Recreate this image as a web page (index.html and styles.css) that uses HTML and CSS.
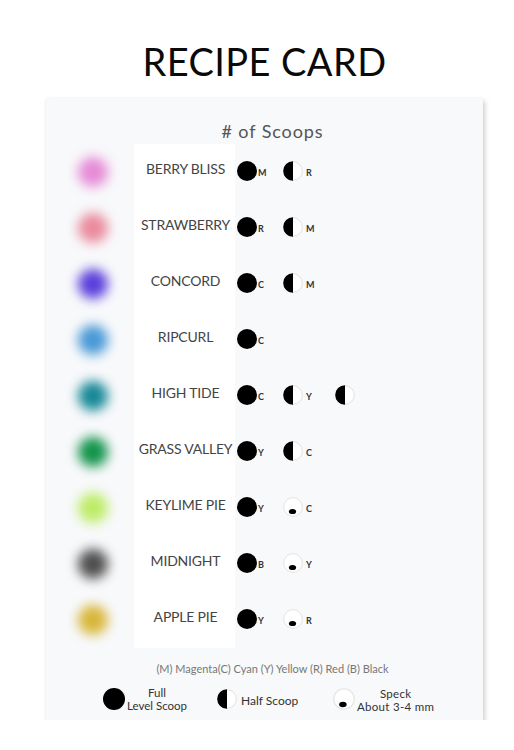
FILE: index.html
```html
<!DOCTYPE html>
<html>
<head>
<meta charset="utf-8">
<link rel="stylesheet" href="styles.css">
</head>
<body>
<div class="page">
  <h1 class="title">RECIPE CARD</h1>
  <div class="card">
    <div class="head">#&nbsp;of Scoops</div>
    <div class="rows">
      <div class="row">
        <div class="swatch"><span class="blob" style="background:#e68ad6"></span></div>
        <div class="name">BERRY BLISS</div>
        <div class="doses">
          <div class="dose"><span class="full"></span><span class="ltr">M</span></div>
          <div class="dose"><svg class="half" viewBox="0 0 20 20"><circle cx="10" cy="10" r="9.3" fill="#fff" stroke="#e0e0e0" stroke-width="1"/><path d="M10 0.2 A9.8 9.8 0 0 0 10 19.8 Z" fill="#000"/></svg><span class="ltr">R</span></div>
        </div>
      </div>
      <div class="row">
        <div class="swatch"><span class="blob" style="background:#ea8a9c"></span></div>
        <div class="name">STRAWBERRY</div>
        <div class="doses">
          <div class="dose"><span class="full"></span><span class="ltr">R</span></div>
          <div class="dose"><svg class="half" viewBox="0 0 20 20"><circle cx="10" cy="10" r="9.3" fill="#fff" stroke="#e0e0e0" stroke-width="1"/><path d="M10 0.2 A9.8 9.8 0 0 0 10 19.8 Z" fill="#000"/></svg><span class="ltr">M</span></div>
        </div>
      </div>
      <div class="row">
        <div class="swatch"><span class="blob" style="background:#5a3edb"></span></div>
        <div class="name">CONCORD</div>
        <div class="doses">
          <div class="dose"><span class="full"></span><span class="ltr">C</span></div>
          <div class="dose"><svg class="half" viewBox="0 0 20 20"><circle cx="10" cy="10" r="9.3" fill="#fff" stroke="#e0e0e0" stroke-width="1"/><path d="M10 0.2 A9.8 9.8 0 0 0 10 19.8 Z" fill="#000"/></svg><span class="ltr">M</span></div>
        </div>
      </div>
      <div class="row">
        <div class="swatch"><span class="blob" style="background:#4898d6"></span></div>
        <div class="name">RIPCURL</div>
        <div class="doses">
          <div class="dose"><span class="full"></span><span class="ltr">C</span></div>
        </div>
      </div>
      <div class="row">
        <div class="swatch"><span class="blob" style="background:#178896"></span></div>
        <div class="name">HIGH TIDE</div>
        <div class="doses">
          <div class="dose"><span class="full"></span><span class="ltr">C</span></div>
          <div class="dose"><svg class="half" viewBox="0 0 20 20"><circle cx="10" cy="10" r="9.3" fill="#fff" stroke="#e0e0e0" stroke-width="1"/><path d="M10 0.2 A9.8 9.8 0 0 0 10 19.8 Z" fill="#000"/></svg><span class="ltr">Y</span></div>
          <div class="dose"><svg class="half" viewBox="0 0 20 20"><circle cx="10" cy="10" r="9.3" fill="#fff" stroke="#e0e0e0" stroke-width="1"/><path d="M10 0.2 A9.8 9.8 0 0 0 10 19.8 Z" fill="#000"/></svg></div>
        </div>
      </div>
      <div class="row">
        <div class="swatch"><span class="blob" style="background:#12934a"></span></div>
        <div class="name">GRASS VALLEY</div>
        <div class="doses">
          <div class="dose"><span class="full"></span><span class="ltr">Y</span></div>
          <div class="dose"><svg class="half" viewBox="0 0 20 20"><circle cx="10" cy="10" r="9.3" fill="#fff" stroke="#e0e0e0" stroke-width="1"/><path d="M10 0.2 A9.8 9.8 0 0 0 10 19.8 Z" fill="#000"/></svg><span class="ltr">C</span></div>
        </div>
      </div>
      <div class="row">
        <div class="swatch"><span class="blob" style="background:#bdec66"></span></div>
        <div class="name">KEYLIME PIE</div>
        <div class="doses">
          <div class="dose"><span class="full"></span><span class="ltr">Y</span></div>
          <div class="dose"><svg class="half" viewBox="0 0 20 20"><circle cx="10" cy="10" r="9.3" fill="#fff" stroke="#e2e2e2" stroke-width="1"/><ellipse cx="9.5" cy="14.5" rx="3.6" ry="2.6" fill="#000"/></svg><span class="ltr">C</span></div>
        </div>
      </div>
      <div class="row">
        <div class="swatch"><span class="blob" style="background:#4e4e4e"></span></div>
        <div class="name">MIDNIGHT</div>
        <div class="doses">
          <div class="dose"><span class="full"></span><span class="ltr">B</span></div>
          <div class="dose"><svg class="half" viewBox="0 0 20 20"><circle cx="10" cy="10" r="9.3" fill="#fff" stroke="#e2e2e2" stroke-width="1"/><ellipse cx="9.5" cy="14.5" rx="3.6" ry="2.6" fill="#000"/></svg><span class="ltr">Y</span></div>
        </div>
      </div>
      <div class="row">
        <div class="swatch"><span class="blob" style="background:#d8b63a"></span></div>
        <div class="name">APPLE PIE</div>
        <div class="doses">
          <div class="dose"><span class="full"></span><span class="ltr">Y</span></div>
          <div class="dose"><svg class="half" viewBox="0 0 20 20"><circle cx="10" cy="10" r="9.3" fill="#fff" stroke="#e2e2e2" stroke-width="1"/><ellipse cx="9.5" cy="14.5" rx="3.6" ry="2.6" fill="#000"/></svg><span class="ltr">R</span></div>
        </div>
      </div>
    </div>
    <div class="codes">(M) Magenta(C) Cyan (Y) Yellow (R) Red (B) Black</div>
    <div class="legend">
      <div class="key key-full"><span class="full big"></span><span class="keytext">Full<br>Level Scoop</span></div>
      <div class="key key-half"><svg class="half" viewBox="0 0 20 20"><circle cx="10" cy="10" r="9.3" fill="#fff" stroke="#e0e0e0" stroke-width="1"/><path d="M10 0.2 A9.8 9.8 0 0 0 10 19.8 Z" fill="#000"/></svg><span class="keytext">Half Scoop</span></div>
      <div class="key key-speck"><svg class="half big" viewBox="0 0 20 20"><circle cx="10" cy="10" r="9.3" fill="#fff" stroke="#e2e2e2" stroke-width="1"/><ellipse cx="9" cy="15" rx="3.4" ry="2.5" fill="#000"/></svg><span class="keytext">Speck<br>About 3-4 mm</span></div>
    </div>
  </div>
</div>
</body>
</html>
```
FILE: styles.css
```css
html, body {
  margin: 0;
  padding: 0;
  background: #ffffff;
}
body {
  font-family: Lato, "Liberation Sans", sans-serif;
  color: #333;
}
.page {
  width: 437px;
  margin-left: 46px;
}
.title {
  margin: 0;
  height: 98px;
  box-sizing: border-box;
  padding-top: 38px;
  text-align: center;
  font-size: 38px;
  line-height: 46px;
  font-weight: 400;
  letter-spacing: 0.4px;
  color: #0a0a0a;
}
.card {
  height: 622px;
  box-sizing: border-box;
  background: #f8f9fb;
  box-shadow: 2px 3px 5px rgba(0,0,0,0.18), 0 0 2px rgba(0,0,0,0.06);
  display: flex;
  flex-direction: column;
}
.head {
  height: 46px;
  box-sizing: border-box;
  padding-top: 21px;
  padding-left: 16px;
  line-height: 24px;
  text-align: center;
  font-size: 18px;
  letter-spacing: 0.9px;
  color: #555;
}
.rows {
  display: flex;
  flex-direction: column;
}
.row {
  display: grid;
  grid-template-columns: 88px 101px 1fr;
  height: 56px;
  align-items: center;
}
.swatch {
  display: flex;
  justify-content: center;
  align-items: center;
  height: 56px;
  padding-left: 6px;
}
.blob {
  width: 30px;
  height: 30px;
  border-radius: 50%;
  filter: blur(6px);
}
.name {
  background: #fff;
  height: 56px;
  box-sizing: border-box;
  padding-bottom: 8px;
  display: flex;
  align-items: center;
  justify-content: center;
  font-size: 14px;
  color: #444;
  letter-spacing: -0.2px;
  white-space: nowrap;
  padding-left: 2px;
}
.doses {
  display: grid;
  grid-template-columns: 46px 52px 52px;
  padding-left: 2px;
  padding-bottom: 2px;
}
.dose {
  display: flex;
  align-items: center;
}
.full {
  display: inline-block;
  width: 20px;
  height: 20px;
  border-radius: 50%;
  background: #000;
  flex: none;
}
.half {
  width: 20px;
  height: 20px;
  flex: none;
}
.ltr {
  font-size: 9px;
  font-weight: 700;
  color: #333;
  margin-left: 3px;
  padding-top: 2px;
}
.full + .ltr {
  margin-left: 1px;
}
.codes {
  margin-top: 14px;
  line-height: 14px;
  text-align: center;
  font-size: 11px;
  color: #777;
  padding-left: 16px;
}
.legend {
  margin-top: 10px;
  height: 26px;
  display: flex;
  align-items: center;
  padding-left: 57px;
}
.key {
  display: flex;
  align-items: center;
  flex: none;
}
.key-full {
  width: 114px;
}
.key-half {
  width: 116px;
}
.full.big, .half.big {
  width: 22px;
  height: 22px;
}
.keytext {
  font-size: 11.5px;
  line-height: 13px;
  text-align: center;
  color: #333;
  margin-left: 2px;
}
.key-half .keytext {
  margin-left: 4px;
  padding-top: 2px;
  font-size: 12px;
}
.key-speck .keytext {
  margin-left: 2px;
  padding-top: 1px;
  letter-spacing: 0.3px;
}
```
